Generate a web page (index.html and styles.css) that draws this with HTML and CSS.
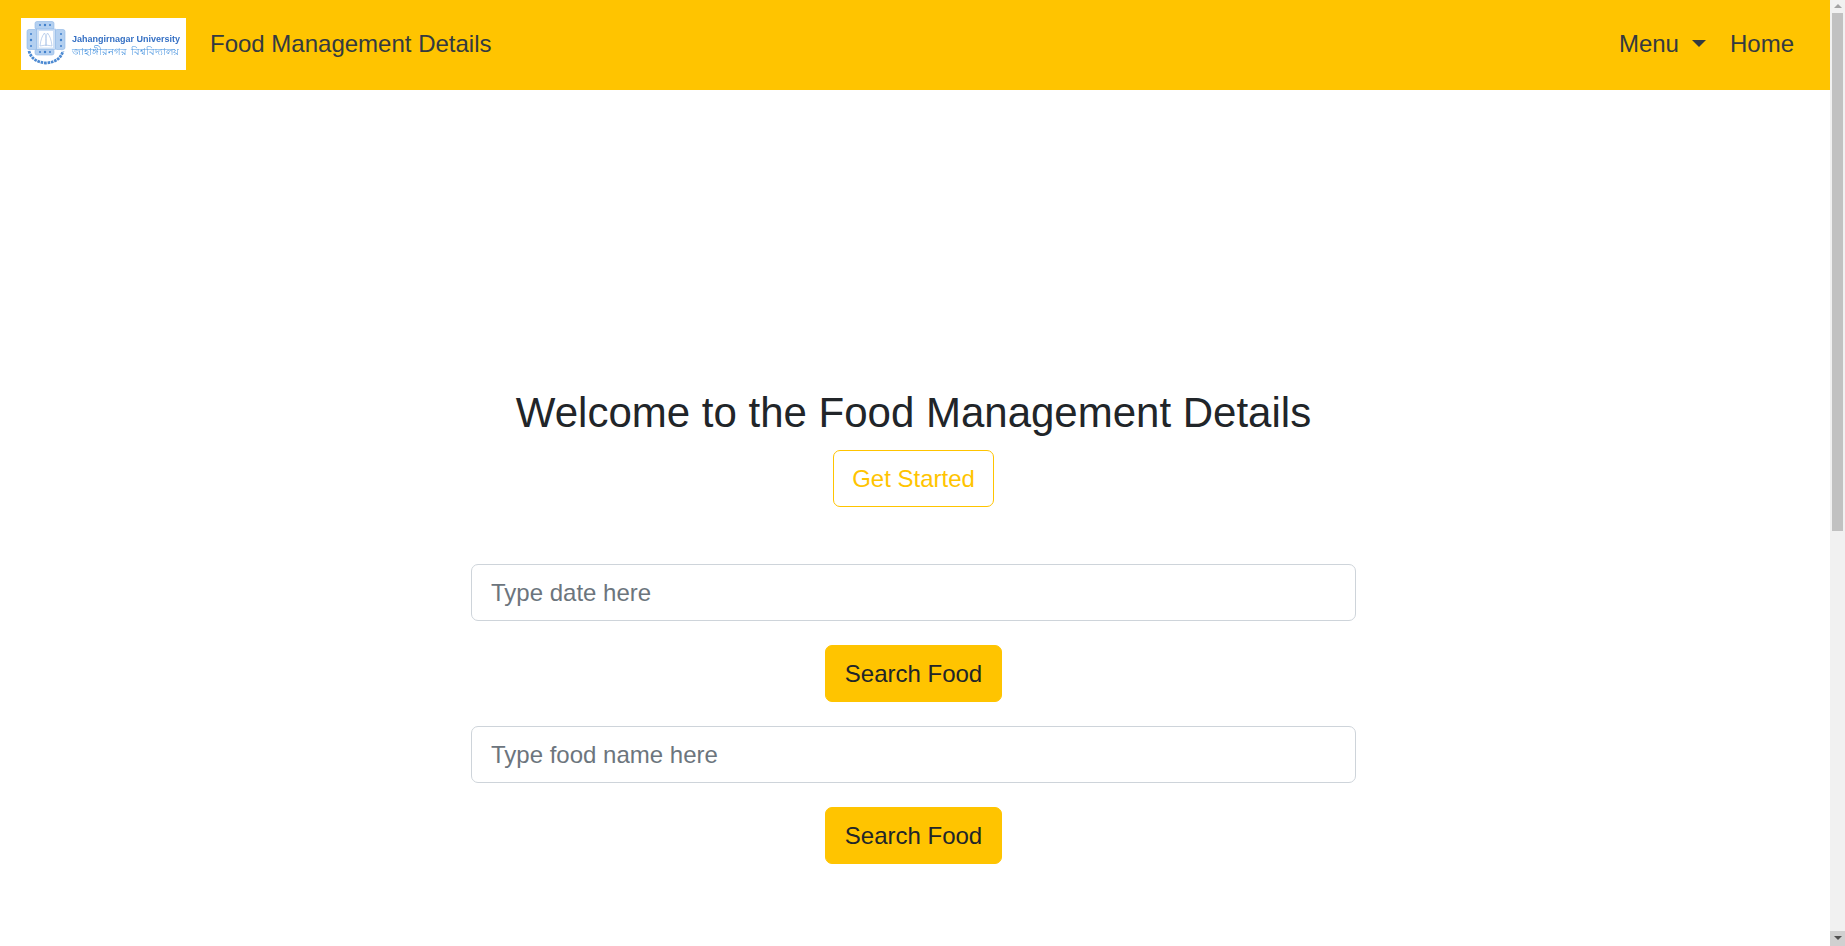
FILE: index.html
```html
<!DOCTYPE html>
<html lang="en">
<head>
<meta charset="utf-8">
<title>Food Management Details</title>
<link rel="stylesheet" href="styles.css">
</head>
<body>
<div class="page">
  <nav class="navbar">
    <div class="brand">
      <svg class="logo" viewBox="0 0 165 52" xmlns="http://www.w3.org/2000/svg">
        <rect width="165" height="52" fill="#fff"/>
        <g class="logo-art">
          <g fill="#b4d0f0" stroke="#8db6e6" stroke-width="0.6">
            <rect x="14" y="3.5" width="19" height="8" rx="2"/>
            <rect x="14" y="31" width="19" height="6" rx="2"/>
            <rect x="6" y="11.5" width="10" height="20" rx="2"/>
            <rect x="34" y="11.5" width="10" height="20" rx="2"/>
          </g>
          <rect x="15.5" y="11" width="19" height="20.5" fill="#cfe0f5" stroke="#8db6e6" stroke-width="0.6"/>
          <rect x="18" y="13" width="14" height="16.5" fill="#fff"/>
          <path d="M19 28 Q20 19 23.5 15 Q26 19 25 28 M31 28 Q30 19 26.5 15 Q24 19 25 28 M19 28 Q25 26 31 28" fill="none" stroke="#a8c2e6" stroke-width="0.7"/>
          <g fill="#3f7fcc">
            <circle cx="10" cy="16" r="1"/><circle cx="10" cy="22" r="1.2"/><circle cx="10" cy="28" r="1"/>
            <circle cx="40" cy="16" r="1"/><circle cx="40" cy="22" r="1.2"/><circle cx="40" cy="28" r="1"/>
            <circle cx="19" cy="7" r="1"/><circle cx="24" cy="7" r="1.2"/><circle cx="29" cy="7" r="1"/>
            <circle cx="19" cy="34" r="1"/><circle cx="24" cy="34" r="1.2"/><circle cx="29" cy="34" r="1"/>
          </g>
          <path d="M8 33 Q11 44 25 45 Q39 44 42 33" fill="none" stroke="#4d8ad2" stroke-width="2.8" stroke-dasharray="2.6 0.8"/>
          <text x="51" y="24" class="logo-en">Jahangirnagar University</text>
          <text x="51" y="37" class="logo-bn">জাহাঙ্গীরনগর  বিশ্ববিদ্যালয়</text>
        </g>
      </svg>
      <span class="brand-name">Food Management Details</span>
    </div>
    <ul class="nav-links">
      <li><a class="nav-link" href="#">Menu<span class="caret"></span></a></li>
      <li><a class="nav-link" href="#">Home</a></li>
    </ul>
  </nav>
  <main class="content">
    <h1 class="title">Welcome to the Food Management Details</h1>
    <a class="btn btn-outline" href="#">Get Started</a>
    <form class="search">
      <input class="field" type="text" placeholder="Type date here">
      <button class="btn btn-solid" type="button">Search Food</button>
      <input class="field" type="text" placeholder="Type food name here">
      <button class="btn btn-solid" type="button">Search Food</button>
    </form>
  </main>
</div>
<aside class="scrollbar" aria-hidden="true">
  <div class="sb-btn sb-up"><span class="arrow-up"></span></div>
  <div class="sb-track"><div class="sb-thumb"></div></div>
  <div class="sb-btn sb-down"><span class="arrow-down"></span></div>
</aside>
</body>
</html>
```
FILE: styles.css
```css
* { box-sizing: border-box; }
body {
  margin: 0;
  height: 100vh;
  overflow: hidden;
  display: flex;
  font-family: "Liberation Sans", Arial, sans-serif;
  font-size: 16px;
  color: #212529;
  background: #fff;
}
.page { flex: 1; min-width: 0; }
.navbar {
  height: 90px;
  background: #ffc400;
  display: flex;
  align-items: center;
  justify-content: space-between;
  padding: 0 28px 2px 21px;
}
.brand { display: flex; align-items: center; gap: 24px; }
.logo { width: 165px; height: 52px; display: block; }
.logo-art { filter: blur(0.4px); }
.logo-en { font: bold 9px "Liberation Sans", Arial, sans-serif; fill: #3570c4; }
.logo-bn { font: 10px "Noto Sans CJK SC", "Liberation Sans", sans-serif; fill: #4c96e0; white-space: pre; }
.brand-name { font-size: 24px; color: #343a40; line-height: 1.5; }
.nav-links { list-style: none; display: flex; margin: 0; padding: 0; gap: 8px; }
.nav-link {
  display: block;
  padding: 8px;
  font-size: 24px;
  line-height: 1.5;
  color: #343a40;
  text-decoration: none;
}
.caret {
  display: inline-block;
  margin-left: 13px;
  vertical-align: 5px;
  border-top: 7px solid #343a40;
  border-left: 7px solid transparent;
  border-right: 7px solid transparent;
}
.content {
  display: flex;
  flex-direction: column;
  align-items: center;
  padding: 298px 3px 0 0;
}
.title {
  margin: 0 0 11.6px;
  font-size: 42px;
  font-weight: 500;
  line-height: 1.2;
  color: #212529;
}
.btn {
  display: inline-block;
  height: 57px;
  padding: 0 19px;
  font-family: inherit;
  font-size: 24px;
  line-height: 55px;
  border-radius: 7px;
  border: 1px solid #ffc400;
  text-decoration: none;
}
.btn-outline { padding: 0 18px; color: #ffc400; background: transparent; }
.btn-solid { color: #212529; background: #ffc400; }
.search {
  width: 885px;
  margin-top: 57px;
  display: flex;
  flex-direction: column;
  align-items: center;
}
.field {
  width: 100%;
  height: 57px;
  padding: 2px 19px 0;
  font-family: inherit;
  font-size: 24px;
  color: #212529;
  border: 1px solid #ced4da;
  border-radius: 7px;
  margin-bottom: 24px;
  background: #fff;
}
.field::placeholder { color: #6c757d; opacity: 1; }
.search .btn-solid { margin-bottom: 24px; }
.scrollbar {
  width: 15px;
  flex: none;
  height: 100%;
  display: flex;
  flex-direction: column;
  background: #f1f1f1;
}
.sb-btn { flex: none; display: flex; justify-content: center; }
.sb-up { height: 13px; padding-top: 4px; }
.sb-down { height: 15px; padding-top: 5px; background: #d0d0d0; }
.arrow-up { height: 0; border-bottom: 4px solid #a3a3a3; border-left: 4px solid transparent; border-right: 4px solid transparent; }
.arrow-down { height: 0; border-top: 4px solid #505050; border-left: 4px solid transparent; border-right: 4px solid transparent; }
.sb-track { flex: 1; padding: 0 2px; }
.sb-thumb { height: 518px; background: #c1c1c1; }
```
